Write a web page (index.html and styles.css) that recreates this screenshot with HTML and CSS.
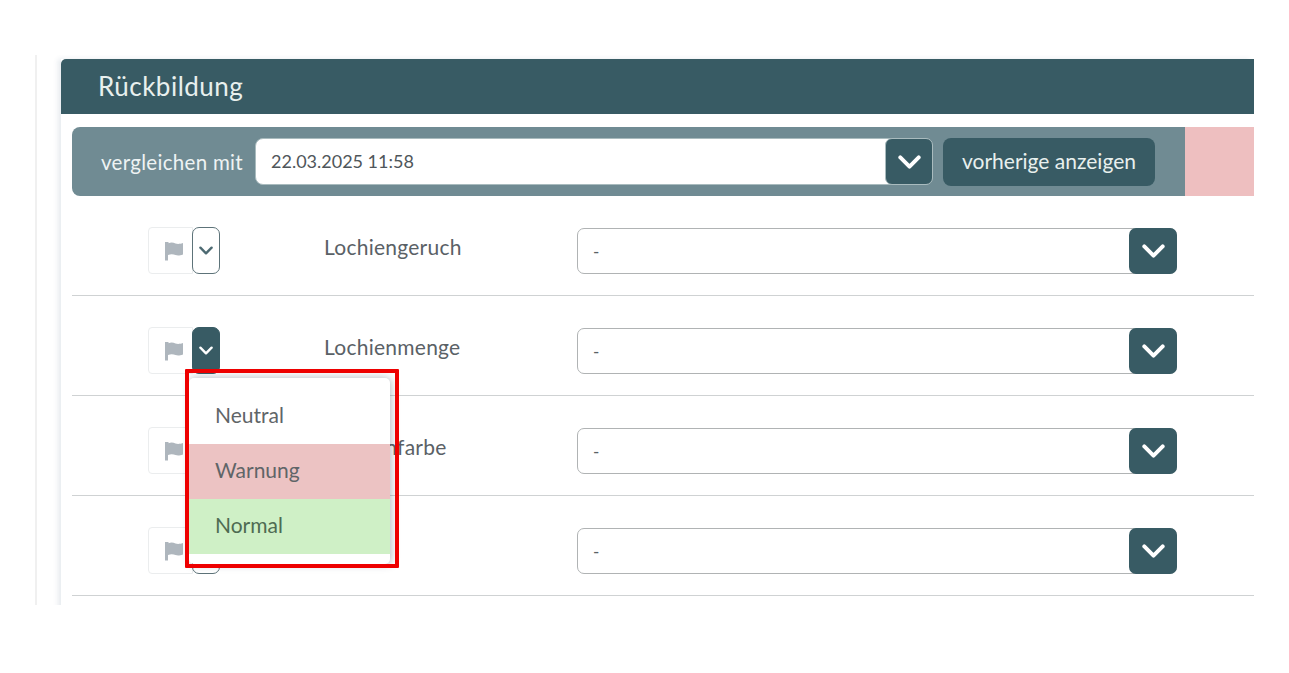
FILE: index.html
```html
<!DOCTYPE html>
<html lang="de">
<head>
  <meta charset="UTF-8" />
  <title>Rückbildung</title>
  <link rel="stylesheet" href="styles.css">
</head>
<body>

  <svg class="icon-defs" width="0" height="0">
    <symbol id="chevron" viewBox="0 0 20 12">
      <path d="M2 2l8 8 8-8" fill="none" stroke="currentColor" stroke-width="3.400" stroke-linecap="round" stroke-linejoin="round" />
    </symbol>
    <symbol id="flag" viewBox="0 0 20 20">
      <path d="M1 1h3.500v1.200c3-1.200 5-.4 7 .3 2 .6 4 .6 7.500-.5v11.500c-3.500 1.200-5.500 1.200-7.500.5-2-.7-4-1.300-7.500-.1V19.500H1z" fill="currentColor" />
    </symbol>
  </svg>

  <div class="frame">
    <section class="panel">
      <h2 class="panel-title">Rückbildung</h2>

      <div class="compare-bar">
        <div class="compare-main">
          <span class="compare-label">vergleichen mit</span>
          <div class="compare-select">
            <span class="compare-value">22.03.2025 11:58</span>
            <span class="compare-arrow"><svg class="chevron-big"><use href="#chevron" /></svg></span>
          </div>
          <button class="show-btn">vorherige anzeigen</button>
        </div>
        <div class="compare-status"></div>
      </div>

      <div class="row">
        <div class="flag-group">
          <span class="flag-box"><svg class="flag-icon"><use href="#flag" /></svg></span>
          <span class="flag-toggle"><svg class="chevron-small"><use href="#chevron" /></svg></span>
        </div>
        <span class="row-label">Lochiengeruch</span>
        <div class="select"><span class="select-value">-</span><span class="select-arrow"><svg class="chevron-big"><use href="#chevron" /></svg></span></div>
      </div>

      <div class="row">
        <div class="flag-group">
          <span class="flag-box"><svg class="flag-icon"><use href="#flag" /></svg></span>
          <span class="flag-toggle open"><svg class="chevron-small"><use href="#chevron" /></svg></span>
          <div class="flag-menu">
            <div class="flag-option">Neutral</div>
            <div class="flag-option warn">Warnung</div>
            <div class="flag-option ok">Normal</div>
          </div>
          <div class="highlight"></div>
        </div>
        <span class="row-label">Lochienmenge</span>
        <div class="select"><span class="select-value">-</span><span class="select-arrow"><svg class="chevron-big"><use href="#chevron" /></svg></span></div>
      </div>

      <div class="row">
        <div class="flag-group">
          <span class="flag-box"><svg class="flag-icon"><use href="#flag" /></svg></span>
          <span class="flag-toggle"><svg class="chevron-small"><use href="#chevron" /></svg></span>
        </div>
        <span class="row-label">Lochienfarbe</span>
        <div class="select"><span class="select-value">-</span><span class="select-arrow"><svg class="chevron-big"><use href="#chevron" /></svg></span></div>
      </div>

      <div class="row">
        <div class="flag-group">
          <span class="flag-box"><svg class="flag-icon"><use href="#flag" /></svg></span>
          <span class="flag-toggle"><svg class="chevron-small"><use href="#chevron" /></svg></span>
        </div>
        <span class="row-label"></span>
        <div class="select"><span class="select-value">-</span><span class="select-arrow"><svg class="chevron-big"><use href="#chevron" /></svg></span></div>
      </div>
    </section>
  </div>

</body>
</html>
```

FILE: styles.css
```css
* {
  box-sizing: border-box;
}

body {
  margin: 0;
  background-color: #ffffff;
  color: #5a6166;
  font-family: Lato, "Open Sans", sans-serif;
}

.icon-defs {
  position: absolute;
}

.frame {
  width: 1219px;
  height: 550px;
  margin: 55px 0 0 35px;
  padding: 4px 0 0 26px;
  border-left: 2px solid #f0f0f0;
  overflow: hidden;
}

.panel {
  box-shadow: -4px -1px 5px -1px rgba(60, 90, 120, 0.12);
  height: 560px;
  margin-left: -2px;
}

.panel-title {
  margin: 0;
  height: 55px;
  padding: 11px 0 0 37px;
  background-color: #385b64;
  color: #e8f0ee;
  border-radius: 5px 0 0 0;
  font-size: 26px;
  font-weight: 400;
  letter-spacing: 0.5px;
  line-height: 32px;
}

.compare-bar {
  display: flex;
  height: 69px;
  margin: 13px 0 0 11px;
}

.compare-main {
  flex: 1;
  display: flex;
  align-items: center;
  padding-left: 29px;
  background-color: #708b93;
  border-radius: 8px 0 0 8px;
}

.compare-label {
  width: 155px;
  color: #eef3f3;
  font-size: 20.500px;
  letter-spacing: 0.3px;
}

.compare-select {
  display: flex;
  justify-content: space-between;
  width: 678px;
  height: 47px;
  margin-left: -1px;
  background-color: #ffffff;
  border: 1px solid #a9bbbe;
  border-radius: 8px;
}

.compare-value {
  padding: 11px 0 0 15px;
  font-size: 18px;
  color: #4f565a;
}

.compare-arrow {
  display: flex;
  align-items: center;
  justify-content: center;
  width: 48px;
  margin: -1px;
  background-color: #385b64;
  border: 1px solid #a9bbbe;
  border-radius: 7px;
  color: #ffffff;
}

.show-btn {
  width: 212px;
  height: 48px;
  margin-left: 10px;
  padding: 0 0 3px;
  background-color: #385b64;
  color: #e8f0ee;
  border: none;
  border-radius: 8px;
  font-family: inherit;
  font-size: 21px;
}

.compare-status {
  width: 69px;
  background-color: #eebfc0;
}

.row {
  display: flex;
  align-items: flex-start;
  height: 100px;
  margin-left: 11px;
  padding: 31px 0 0 76px;
  border-bottom: 1px solid #cfd2d3;
}

.flag-group {
  position: relative;
  display: flex;
  width: 72px;
  height: 47px;
}

.flag-box {
  display: flex;
  align-items: center;
  justify-content: center;
  width: 45px;
  padding-left: 7px;
  border: 1px solid #ebedee;
  border-radius: 4px 0 0 4px;
}

.flag-icon {
  width: 20px;
  height: 20px;
  color: #aeb6bd;
}

.flag-toggle {
  display: flex;
  align-items: center;
  justify-content: center;
  width: 28px;
  margin-left: -1px;
  background-color: #ffffff;
  border: 1.500px solid #5d7379;
  border-radius: 7px;
  color: #4d6a72;
}

.flag-toggle.open {
  background-color: #385b64;
  color: #ffffff;
  border-color: #385b64;
}

.flag-menu {
  position: absolute;
  top: 51px;
  left: 41px;
  width: 201px;
  height: 186px;
  padding: 11px 0 0;
  background-color: #ffffff;
  border-radius: 5px;
  box-shadow: 1px 0 9px rgba(60, 70, 90, 0.4);
  font-size: 21px;
  z-index: 2;
}

.flag-option {
  height: 55px;
  padding: 12px 0 0 26px;
  line-height: 28px;
  color: #5f6568;
}

.flag-option.warn {
  background-color: #ecc3c3;
}

.flag-option.ok {
  background-color: #cff0c6;
  color: #4e6b52;
}

.highlight {
  position: absolute;
  top: 42px;
  left: 37px;
  width: 214px;
  height: 199px;
  border: 4px solid #ee0000;
  border-radius: 1px;
  z-index: 3;
}

.row-label {
  width: 253px;
  margin-left: 104px;
  padding-top: 6px;
  font-size: 21px;
  letter-spacing: 0.25px;
  line-height: 28px;
}

.select {
  display: flex;
  justify-content: space-between;
  width: 600px;
  height: 46px;
  margin-top: 1px;
  background-color: #ffffff;
  border: 1px solid #b0b3b4;
  border-radius: 7px;
}

.select-value {
  padding: 12px 0 0 15px;
  font-size: 17px;
}

.select-arrow {
  display: flex;
  align-items: center;
  justify-content: center;
  width: 48px;
  margin: -1px;
  background-color: #385b64;
  border-radius: 7px;
  color: #ffffff;
}

.chevron-big {
  width: 23px;
  height: 14px;
}

.chevron-small {
  width: 14px;
  height: 9px;
}
```
